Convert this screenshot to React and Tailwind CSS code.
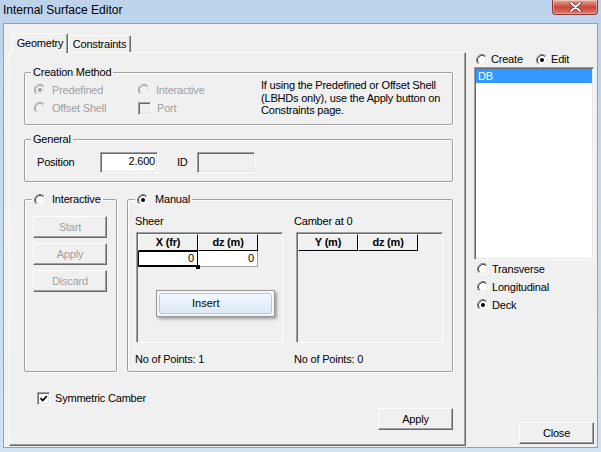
import React from "react";

function Radio({ checked, disabled }) {
  return (
    <svg width="12" height="12" viewBox="0 0 12 12" className="shrink-0">
      <circle cx="6" cy="6" r="5" fill={disabled ? "#f0f0f0" : "#fff"} />
      <path d="M2.11 9.89A5.5 5.5 0 0 1 9.89 2.11" fill="none" stroke={disabled ? "#a0a0a0" : "#808080"} />
      <path d="M2.82 9.18A4.5 4.5 0 0 1 9.18 2.82" fill="none" stroke={disabled ? "#b4b4b4" : "#404040"} />
      <path d="M9.89 2.11A5.5 5.5 0 0 1 2.11 9.89" fill="none" stroke="#ffffff" />
      <path d="M9.18 2.82A4.5 4.5 0 0 1 2.82 9.18" fill="none" stroke="#e3e3e3" />
      {checked && <circle cx="6" cy="6" r="2" fill={disabled ? "#a0a0a0" : "#000"} />}
    </svg>
  );
}

function Check({ checked, disabled }) {
  return (
    <span
      className={`w-[13px] h-[13px] shrink-0 flex items-center justify-center border border-t-[#a0a0a0] border-l-[#a0a0a0] border-r-white border-b-white shadow-[inset_1px_1px_0_#696969,inset_-1px_-1px_0_#e3e3e3] ${
        disabled ? "bg-[#f0f0f0]" : "bg-white"
      }`}
    >
      {checked && (
        <svg width="9" height="9" viewBox="0 0 9 9">
          <path d="M1.5 4.2l2.2 2.3L7.8 2" stroke="#000" strokeWidth="1.8" fill="none" />
        </svg>
      )}
    </span>
  );
}

function Btn({ children, disabled, className = "" }) {
  return (
    <div
      className={`h-[22px] flex items-center justify-center bg-[#f0f0f0] border border-t-white border-l-white border-r-[#696969] border-b-[#696969] shadow-[inset_-1px_-1px_0_#a0a0a0] ${
        disabled ? "text-[#a0a0a0]" : "text-black"
      } ${className}`}
    >
      {children}
    </div>
  );
}

function Group({ legend, className = "", children }) {
  return (
    <fieldset
      className={`border border-[#a0a0a0] rounded-[2px] shadow-[inset_1px_1px_0_#fff,1px_1px_0_#fff] ${className}`}
    >
      <legend className="ml-[6px] px-[2px] leading-[13px] bg-[#f0f0f0]">{legend}</legend>
      {children}
    </fieldset>
  );
}

function RadioGroup({ label, checked, className = "", children }) {
  return (
    <fieldset
      className={`border border-[#a0a0a0] rounded-[2px] shadow-[inset_1px_1px_0_#fff,1px_1px_0_#fff] ${className}`}
    >
      <legend className="ml-[7px] px-[2px] leading-[13px] bg-[#f0f0f0]">
        <span className="flex items-center gap-[6px]">
          <Radio checked={checked} />
          {label}
        </span>
      </legend>
      {children}
    </fieldset>
  );
}

function Option({ label, checked, disabled, box }) {
  return (
    <div className={`flex items-center gap-[6px] ${disabled ? "text-[#a0a0a0]" : "text-black"}`}>
      {box ? <Check checked={checked} disabled={disabled} /> : <Radio checked={checked} disabled={disabled} />}
      {label}
    </div>
  );
}

function Grid({ cols, row, children }) {
  return (
    <div className="relative w-[147px] h-[111px] bg-[#f0f0f0] border border-t-[#a0a0a0] border-l-[#a0a0a0] border-r-white border-b-white shadow-[inset_1px_1px_0_#696969]">
      <div className="flex pl-[1px] pt-[1px]">
        {cols.map((c) => (
          <div
            key={c}
            className="w-[60px] h-[17px] flex items-center justify-center font-bold border border-t-white border-l-white border-r-black border-b-black"
          >
            {c}
          </div>
        ))}
      </div>
      {row && (
        <div className="flex pl-[1px]">
          <div className="relative w-[60px] h-[16px] bg-white border border-black border-b-2 text-right pr-[3px] leading-[13px]">
            0
            <span className="absolute -right-[3px] -bottom-[4px] w-[4px] h-[4px] bg-black" />
          </div>
          <div className="w-[60px] h-[16px] bg-white border-r border-b border-r-[#a0a0a0] border-b-[#a0a0a0] text-right pr-[3px] leading-[15px]">
            0
          </div>
        </div>
      )}
      {children}
    </div>
  );
}

export default function App() {
  return (
    <div className="w-[601px] h-[452px] flex flex-col overflow-hidden bg-gradient-to-b from-[#bcd3eb] to-[#d2e2f3] text-black font-['Liberation_Sans',Arial,sans-serif]">
      {/* title bar */}
      <div className="h-[23px] flex items-start shrink-0">
        <div className="pl-[3px] pt-[3px] text-[12px] leading-[15px]">Internal Surface Editor</div>
        <div className="ml-auto mr-[3px] w-[46px] h-[15px] rounded-b-[4px] border border-t-0 border-[#8a3a34] bg-gradient-to-b from-[#e8a89c] via-[#c9453a] to-[#d77a6c] shadow-[inset_0_0_0_1px_rgba(255,255,255,0.35)] flex items-center justify-center">
          <svg width="13" height="10" viewBox="0 0 13 10">
            <path d="M2 1l9 8M11 1l-9 8" stroke="#5a2a26" strokeWidth="3.2" strokeLinecap="round" />
            <path d="M2 1l9 8M11 1l-9 8" stroke="#fff" strokeWidth="1.8" strokeLinecap="round" />
          </svg>
        </div>
      </div>

      {/* body */}
      <div className="mx-[3px] h-[425px] border border-[#8fa3ba] bg-[#f0f0f0] flex text-[11px] tracking-[-0.2px]">
        {/* left: tab control */}
        <div className="w-[462px] shrink-0 pl-[5px] pt-[9px] flex flex-col">
          <div className="h-[19px] flex items-end pl-[3px]">
            <div className="relative z-10 -mb-[1px] w-[56px] h-[20px] bg-[#f0f0f0] rounded-t-[2px] border border-b-0 border-t-white border-l-white border-r-[#696969] shadow-[inset_-1px_0_0_#a0a0a0] flex items-center justify-center">
              Geometry
            </div>
            <div className="w-[63px] h-[17px] rounded-t-[2px] border border-b-0 border-t-white border-l-white border-r-[#696969] shadow-[inset_-1px_0_0_#a0a0a0] flex items-center justify-center">
              Constraints
            </div>
          </div>

          <div className="w-[457px] h-[394px] border border-t-white border-l-white border-r-[#696969] border-b-[#696969] shadow-[inset_-1px_-1px_0_#a0a0a0] flex flex-col">
            <Group legend="Creation Method" className="ml-[14px] mt-[13px] w-[429px] h-[59px]">
              <div className="flex pl-[9px]">
                <div className="grid grid-cols-[104px_123px] grid-rows-[18px_18px] pt-[2px]">
                  <Option label="Predefined" checked disabled />
                  <Option label="Interactive" disabled />
                  <Option label="Offset Shell" disabled />
                  <Option label="Port" disabled box />
                </div>
                <div className="leading-[12.5px]">
                  If using the Predefined or Offset Shell
                  <br />
                  (LBHDs only), use the Apply button on
                  <br />
                  Constraints page.
                </div>
              </div>
            </Group>

            <Group legend="General" className="ml-[14px] mt-[8px] w-[429px] h-[49px]">
              <div className="flex items-center h-[21px] mt-[6px] pl-[12px]">
                <div className="w-[63px]">Position</div>
                <div className="w-[58px] h-[21px] bg-white border border-t-[#a0a0a0] border-l-[#a0a0a0] border-r-white border-b-white shadow-[inset_1px_1px_0_#696969,inset_-1px_-1px_0_#e3e3e3] text-right pr-[2px] leading-[17px]">
                  2.600
                </div>
                <div className="ml-[19px] w-[20px]">ID</div>
                <div className="w-[58px] h-[21px] bg-[#f0f0f0] border border-t-[#a0a0a0] border-l-[#a0a0a0] border-r-white border-b-white shadow-[inset_1px_1px_0_#696969,inset_-1px_-1px_0_#e3e3e3]" />
              </div>
            </Group>

            <div className="flex ml-[14px] mt-[11px] gap-[10px]">
              <RadioGroup label="Interactive" className="w-[93px] h-[179px]">
                <div className="flex flex-col gap-[5px] pl-[8px] mt-[10px]">
                  <Btn disabled className="w-[74px]">Start</Btn>
                  <Btn disabled className="w-[74px]">Apply</Btn>
                  <Btn disabled className="w-[74px]">Discard</Btn>
                </div>
              </RadioGroup>

              <RadioGroup label="Manual" checked className="w-[326px] h-[179px]">
                <div className="flex pl-[7px]">
                  <div className="w-[159px] flex flex-col">
                    <div className="mt-[9px] leading-[13px]">Sheer</div>
                    <div className="mt-[4px] ml-[1px]">
                      <Grid cols={["X (fr)", "dz (m)"]} row>
                        <div className="absolute left-[19px] top-[57px] w-[119px] h-[27px] bg-[#f5f5f5] border border-[#979797] shadow-[2px_2px_3px_rgba(0,0,0,0.35)] p-[2px] z-20">
                          <div className="h-[21px] rounded-[3px] border border-[#a9c9ef] bg-gradient-to-b from-[#f3f8fe] to-[#dce9f8] pl-[32px] leading-[19px] tracking-normal">
                            Insert
                          </div>
                        </div>
                      </Grid>
                    </div>
                    <div className="mt-[10px] leading-[13px]">No of Points: 1</div>
                  </div>
                  <div className="flex flex-col">
                    <div className="mt-[9px] leading-[13px]">Camber at 0</div>
                    <div className="mt-[4px] ml-[2px]">
                      <Grid cols={["Y (m)", "dz (m)"]} />
                    </div>
                    <div className="mt-[10px] leading-[13px]">No of Points: 0</div>
                  </div>
                </div>
              </RadioGroup>
            </div>

            <div className="ml-[27px] mt-[20px] h-[13px] flex items-center gap-[5px]">
              <Check checked />
              Symmetric Camber
            </div>

            <Btn className="w-[75px] self-end mr-[12px] mt-[3px]">Apply</Btn>
          </div>
        </div>

        {/* right column */}
        <div className="flex-1 flex flex-col">
          <div className="pt-[29px] pl-[10px] flex h-[42px] items-end">
            <div className="w-[60px] h-[13px] flex items-center gap-[3px]">
              <Radio />
              Create
            </div>
            <div className="h-[13px] flex items-center gap-[3px]">
              <Radio checked />
              Edit
            </div>
          </div>
          <div className="ml-[8px] mt-[1px] w-[120px] h-[193px] bg-white border border-t-[#a0a0a0] border-l-[#a0a0a0] border-r-white border-b-white shadow-[inset_1px_1px_0_#696969,inset_-1px_-1px_0_#e3e3e3] p-[1px]">
            <div className="h-[14px] bg-[#3399ff] text-white leading-[14px] pl-[2px]">DB</div>
          </div>
          <div className="pl-[11px] flex flex-col">
            <div className="h-[18px] flex items-center gap-[3px]">
              <Radio />
              Transverse
            </div>
            <div className="h-[18px] flex items-center gap-[3px]">
              <Radio />
              Longitudinal
            </div>
            <div className="h-[18px] flex items-center gap-[3px]">
              <Radio checked />
              Deck
            </div>
          </div>
          <Btn className="w-[75px] ml-[53px] mt-auto mb-[3px]">Close</Btn>
        </div>
      </div>
    </div>
  );
}
